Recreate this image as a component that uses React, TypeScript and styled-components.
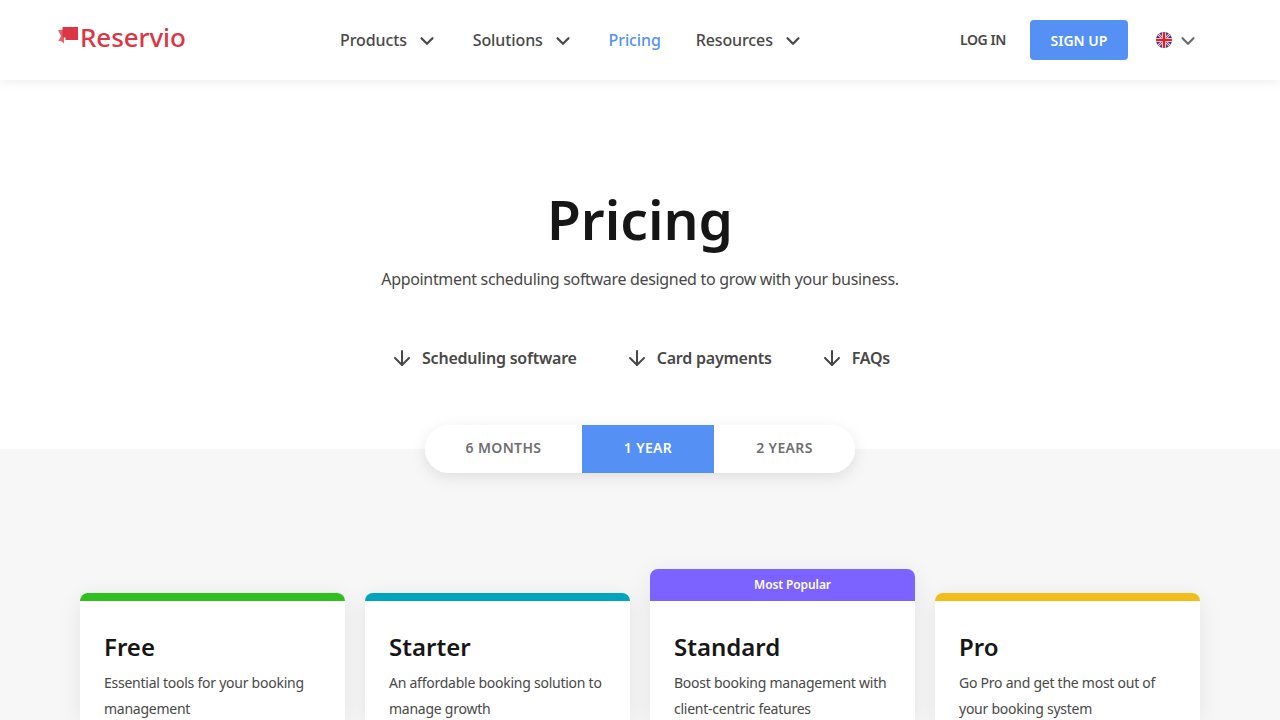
import React from 'react';
import styled, { createGlobalStyle } from 'styled-components';
import { ChevronDown, ArrowDown } from 'lucide-react';

const GlobalStyle = createGlobalStyle`
  html, body {
    margin: 0;
    height: 720px;
    overflow: hidden;
    background: #fff;
    font-family: 'Noto Sans', sans-serif;
    color: #484848;
  }
  * { box-sizing: border-box; }
`;

const navItems = [
  { label: 'Products', caret: true },
  { label: 'Solutions', caret: true },
  { label: 'Pricing', active: true },
  { label: 'Resources', caret: true },
];

const anchors = ['Scheduling software', 'Card payments', 'FAQs'];

const plans = [
  { name: 'Free', color: '#2fbf1f', text: 'Essential tools for your booking management' },
  { name: 'Starter', color: '#00a5bd', text: 'An affordable booking solution to manage growth' },
  { name: 'Standard', color: '#7c62ff', text: 'Boost booking management with client-centric features', badge: 'Most Popular' },
  { name: 'Pro', color: '#f2bd16', text: 'Go Pro and get the most out of your booking system' },
];

const App = () => (
  <>
    <GlobalStyle />
    <Header>
      <Logo href="#">
        <LogoMark width="20" height="17" viewBox="0 0 20 17">
          <path d="M0 3h6v13.5L3 14H0.5L3 9z" fill="#e8616d" />
          <path d="M4.5 0H20v13H7.5v-2.5h-3z" fill="#dc3545" />
        </LogoMark>
        <LogoText>Reservio</LogoText>
      </Logo>
      <Nav>
        {navItems.map(item => (
          <NavItem key={item.label} $active={item.active}>
            {item.label}
            {item.caret && <ChevronDown size={22} strokeWidth={2.4} />}
          </NavItem>
        ))}
      </Nav>
      <Actions>
        <LogIn>LOG IN</LogIn>
        <SignUp>SIGN UP</SignUp>
        <Lang>
          <svg width="16" height="16" viewBox="0 0 16 16">
            <defs><clipPath id="flag"><circle cx="8" cy="8" r="8" /></clipPath></defs>
            <g clipPath="url(#flag)">
              <rect width="16" height="16" fill="#27358f" />
              <path d="M0 0l16 16M16 0L0 16" stroke="#fff" strokeWidth="2.6" />
              <path d="M0 0l16 16M16 0L0 16" stroke="#d8232f" strokeWidth="1.1" />
              <path d="M8 0v16M0 8h16" stroke="#fff" strokeWidth="4.2" />
              <path d="M8 0v16M0 8h16" stroke="#d8232f" strokeWidth="2.6" />
            </g>
          </svg>
          <ChevronDown size={22} strokeWidth={2.4} color="#6b6b6b" />
        </Lang>
      </Actions>
    </Header>

    <Hero>
      <Title>Pricing</Title>
      <Subtitle>Appointment scheduling software designed to grow with your business.</Subtitle>
      <Anchors>
        {anchors.map(a => (
          <Anchor key={a}>
            <ArrowDown size={24} strokeWidth={2} />
            {a}
          </Anchor>
        ))}
      </Anchors>
    </Hero>

    <PriceArea>
      <Toggle>
        <ToggleItem $w={157}>6 MONTHS</ToggleItem>
        <ToggleItem $w={132} $active>1 YEAR</ToggleItem>
        <ToggleItem $w={141}>2 YEARS</ToggleItem>
      </Toggle>
      <Cards>
        {plans.map(plan => (
          <Card key={plan.name}>
            <CardTop $color={plan.color} $tall={!!plan.badge}>{plan.badge}</CardTop>
            <CardBody>
              <PlanName>{plan.name}</PlanName>
              <PlanText>{plan.text}</PlanText>
            </CardBody>
          </Card>
        ))}
      </Cards>
    </PriceArea>
  </>
);

const Header = styled.header`
  position: relative;
  z-index: 2;
  height: 80px;
  padding: 0 81px 0 58px;
  display: flex;
  align-items: center;
  background: #fff;
  box-shadow: 0 2px 10px rgba(0, 0, 0, 0.07);
`;

const Logo = styled.a`
  display: flex;
  align-items: center;
  gap: 2px;
  width: 282px;
  margin-top: -6px;
  text-decoration: none;
`;

const LogoMark = styled.svg`
  margin-top: -4px;
`;

const LogoText = styled.span`
  font-size: 26px;
  font-weight: 500;
  letter-spacing: -0.1px;
  color: #dc3545;
`;

const Nav = styled.nav`
  display: flex;
  gap: 34.8px;
`;

const NavItem = styled.a<{ $active?: boolean }>`
  display: flex;
  align-items: center;
  gap: 9px;
  font-size: 16px;
  font-weight: 500;
  letter-spacing: -0.1px;
  color: ${p => (p.$active ? '#5591f5' : '#484848')};

  svg {
    margin-top: 2px;
  }
`;

const Actions = styled.div`
  margin-left: auto;
  display: flex;
  align-items: center;
`;

const LogIn = styled.a`
  font-size: 14px;
  font-weight: 600;
  letter-spacing: -0.4px;
  margin-right: 24px;
  margin-top: -2px;
`;

const SignUp = styled.button`
  width: 98px;
  height: 40px;
  border: 0;
  border-radius: 4px;
  background: #5591f5;
  color: #fff;
  font: 600 14px 'Noto Sans', sans-serif;
  margin-right: 28px;
`;

const Lang = styled.div`
  display: flex;
  align-items: center;
  gap: 5px;

  svg:last-child {
    margin-top: 2px;
  }
`;

const Hero = styled.section`
  height: 369px;
  display: flex;
  flex-direction: column;
  align-items: center;
  padding-top: 103px;
`;

const Title = styled.h1`
  margin: 0;
  font-size: 55px;
  line-height: 72px;
  font-weight: 600;
  color: #161616;
`;

const Subtitle = styled.p`
  margin: 10px 0 0;
  font-size: 16px;
  line-height: 28px;
  letter-spacing: -0.32px;
`;

const Anchors = styled.div`
  display: flex;
  gap: 48px;
  margin-top: 53px;
`;

const Anchor = styled.a`
  display: flex;
  align-items: center;
  gap: 8px;
  font-size: 16px;
  font-weight: 600;
  letter-spacing: -0.22px;
`;

const PriceArea = styled.section`
  height: 271px;
  background: #f7f7f7;
  display: flex;
  flex-direction: column;
  align-items: center;
`;

const Toggle = styled.div`
  display: flex;
  flex-shrink: 0;
  height: 48px;
  margin-top: -24px;
  border-radius: 24px;
  overflow: hidden;
  background: #fff;
  box-shadow: 0 4px 16px rgba(0, 0, 0, 0.1);
`;

const ToggleItem = styled.div<{ $w: number; $active?: boolean }>`
  width: ${p => p.$w}px;
  display: flex;
  align-items: center;
  justify-content: center;
  padding-bottom: 3px;
  font-size: 14px;
  font-weight: 600;
  letter-spacing: 0.35px;
  background: ${p => (p.$active ? '#5591f5' : '#fff')};
  color: ${p => (p.$active ? '#fff' : '#6f6f6f')};
`;

const Cards = styled.div`
  display: flex;
  flex-shrink: 0;
  gap: 20px;
  margin-top: 96px;
  align-items: flex-end;
`;

const Card = styled.article`
  width: 265px;
  border-radius: 8px 8px 0 0;
  background: #fff;
  box-shadow: 0 4px 24px rgba(0, 0, 0, 0.08);
`;

const CardTop = styled.div<{ $color: string; $tall: boolean }>`
  height: ${p => (p.$tall ? 32 : 8)}px;
  border-radius: 8px 8px 0 0;
  background: ${p => p.$color};
  color: #fff;
  font-size: 12px;
  font-weight: 600;
  line-height: 32px;
  text-align: center;
  padding-left: 20px;
  letter-spacing: -0.1px;
`;

const CardBody = styled.div`
  height: 119px;
  padding: 28px 24px 0;
`;

const PlanName = styled.h2`
  margin: 0;
  font-size: 24px;
  line-height: 36px;
  font-weight: 600;
  color: #161616;
`;

const PlanText = styled.p`
  margin: 5px 0 0;
  font-size: 14px;
  line-height: 26px;
  letter-spacing: -0.25px;
`;

export default App;
